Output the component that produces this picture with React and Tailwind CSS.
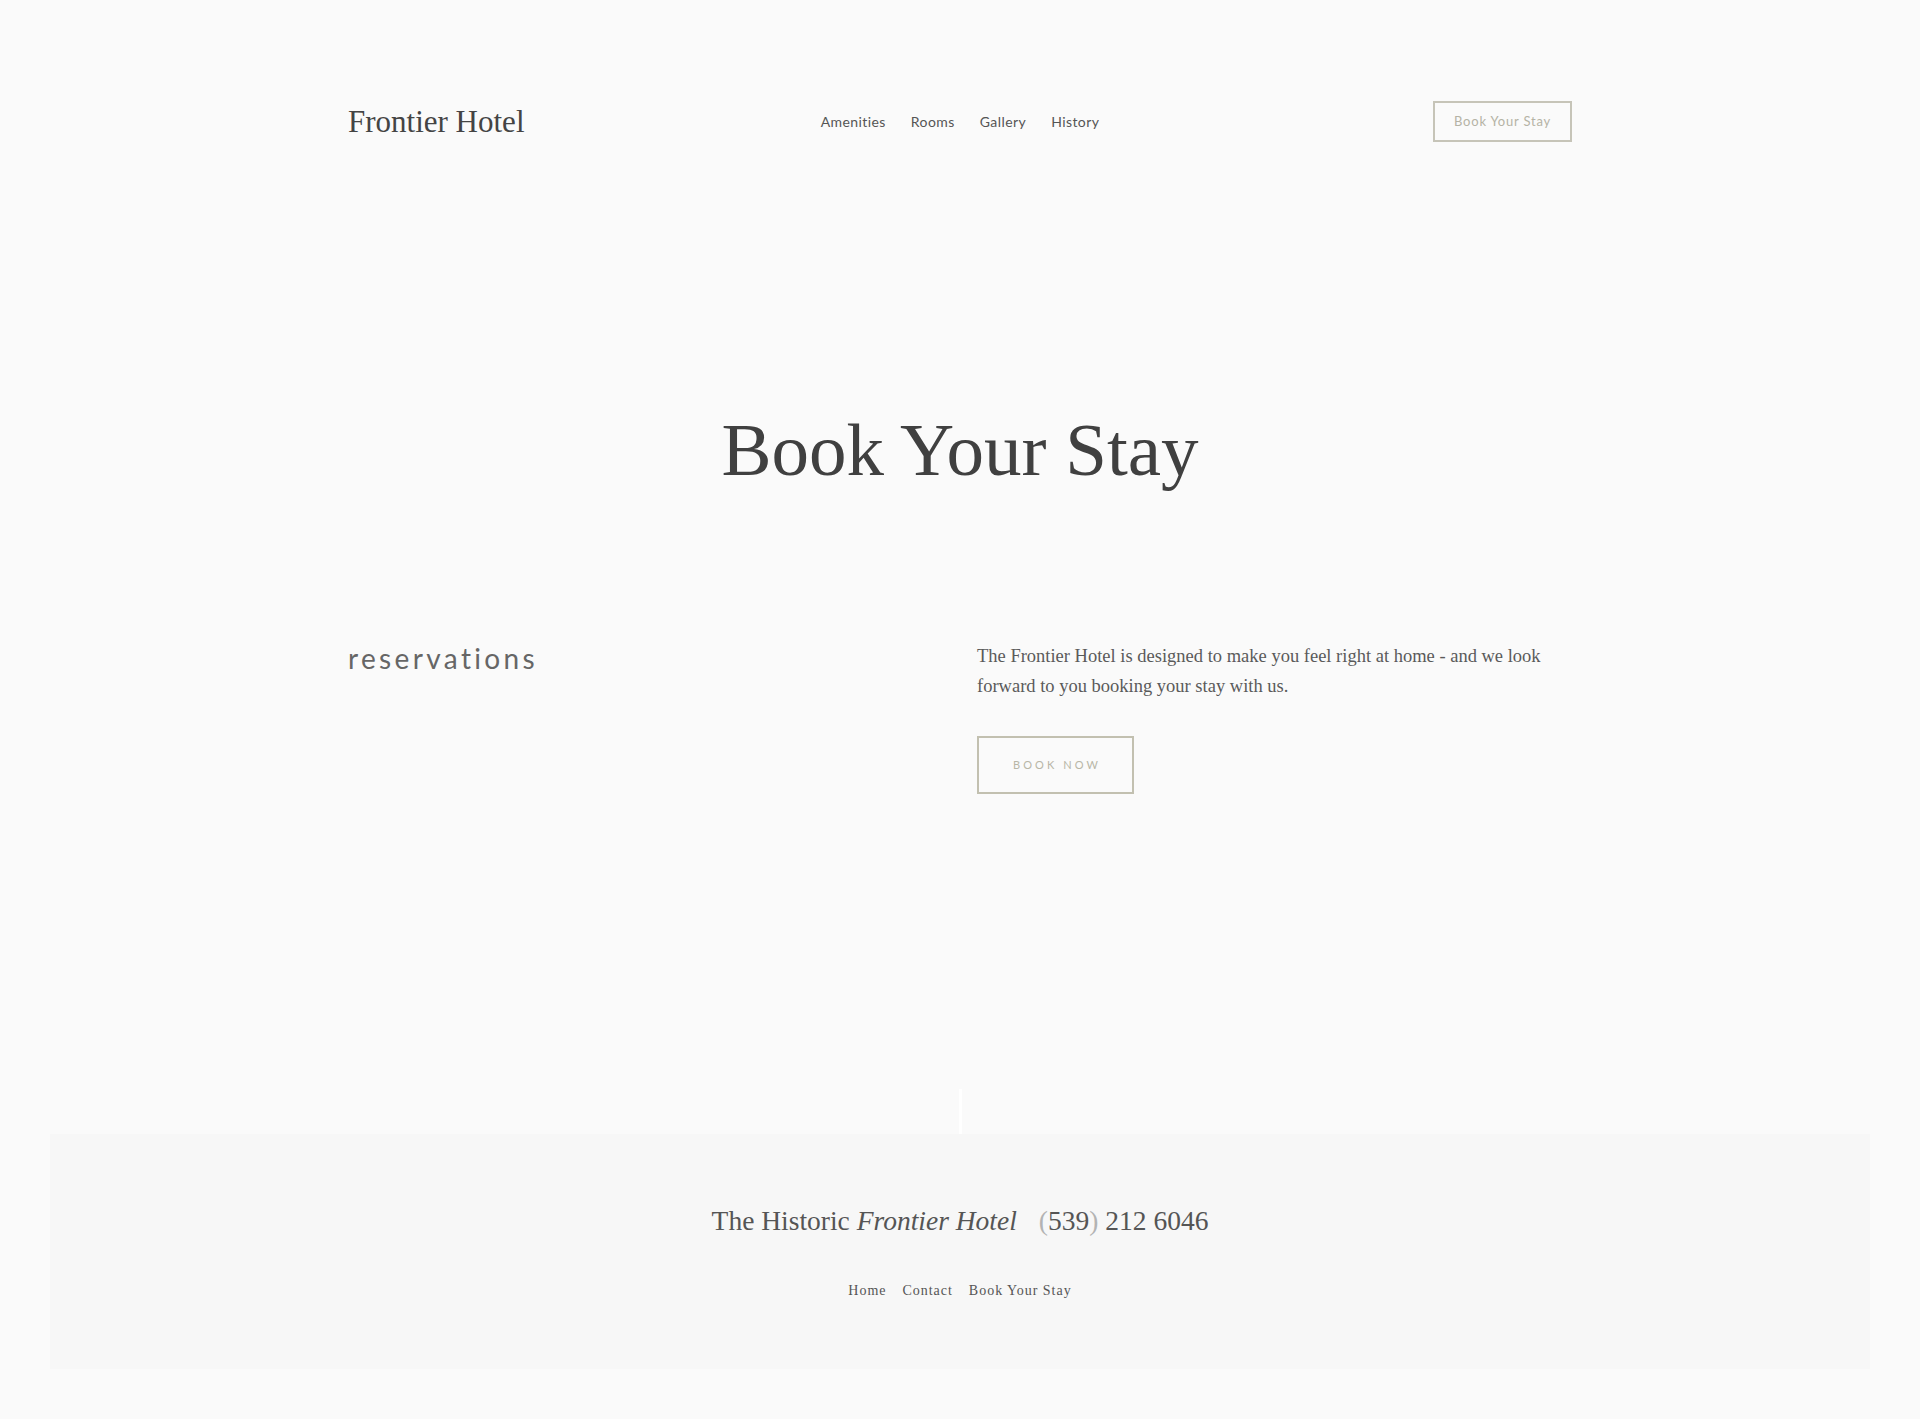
import React from 'react';

const serif = "font-['Liberation_Serif',_'Times_New_Roman',_serif]";
const sans = "font-['Lato',_'Liberation_Sans',_sans-serif]";

const navLinks = ['Amenities', 'Rooms', 'Gallery', 'History'];
const footerLinks = ['Home', 'Contact', 'Book Your Stay'];

export default function App() {
  return (
    <div className="min-h-[1419px] bg-[#fafafa] text-[#444]">
      {/* Header */}
      <header className="pt-[101px]">
        <div className="mx-auto grid h-[41px] max-w-[1224px] grid-cols-[1fr_auto_1fr] items-center">
          <a className={`${serif} justify-self-start text-[31px] leading-none text-[#444]`}>Frontier Hotel</a>
          <nav className={`${sans} flex items-center gap-[25px] text-[14px] leading-[20px] tracking-[0.03em] text-[#555]`}>
            {navLinks.map((link) => (
              <a key={link}>{link}</a>
            ))}
          </nav>
          <button
            className={`${sans} flex h-[41px] w-[139px] items-center justify-center justify-self-end border-2 border-[#c6c4b8] text-[13px] tracking-[0.06em] text-[#b5b3a5]`}
          >
            Book Your Stay
          </button>
        </div>
      </header>

      {/* Hero title */}
      <h1 className={`${serif} mt-[270px] text-center text-[75px] font-normal leading-none text-[#404040]`}>
        Book Your Stay
      </h1>

      {/* Reservations */}
      <section className="mx-auto mt-[154px] grid max-w-[1224px] grid-cols-[629px_1fr]">
        <h2 className={`${sans} mt-[3px] text-[28px] font-normal leading-none tracking-[0.12em] text-[#666]`}>
          reservations
        </h2>
        <div>
          <p className={`${serif} max-w-[575px] text-[18.5px] leading-[30px] text-[#5a5a5a]`}>
            The Frontier Hotel is designed to make you feel right at home - and we look forward to you booking your stay
            with us.
          </p>
          <button
            className={`${sans} mt-[35px] flex h-[58px] w-[157px] items-center justify-center border-2 border-[#c2c0b0] pl-[3px] text-[11px] tracking-[0.28em] text-[#b8b6a6]`}
          >
            BOOK NOW
          </button>
        </div>
      </section>

      {/* Divider line into footer */}
      <div className="mx-auto mt-[295px] h-[45px] w-[3px] bg-white" />

      {/* Footer */}
      <footer className="mx-[50px] h-[235px] bg-[#f7f7f7] pt-[73px]">
        <div className={`${serif} flex items-baseline justify-center text-[27.5px] leading-none text-[#555]`}>
          <span>
            The Historic <em className="italic">Frontier Hotel</em>
          </span>
          <span className="ml-[22px]">
            <span className="text-[#b3b3b3]">(</span>539<span className="text-[#b3b3b3]">)</span> 212 6046
          </span>
        </div>
        <div className={`${serif} mt-[49px] flex justify-center gap-[16px] text-[14px] leading-none tracking-[0.07em] text-[#555]`}>
          {footerLinks.map((link) => (
            <a key={link}>{link}</a>
          ))}
        </div>
      </footer>
    </div>
  );
}
